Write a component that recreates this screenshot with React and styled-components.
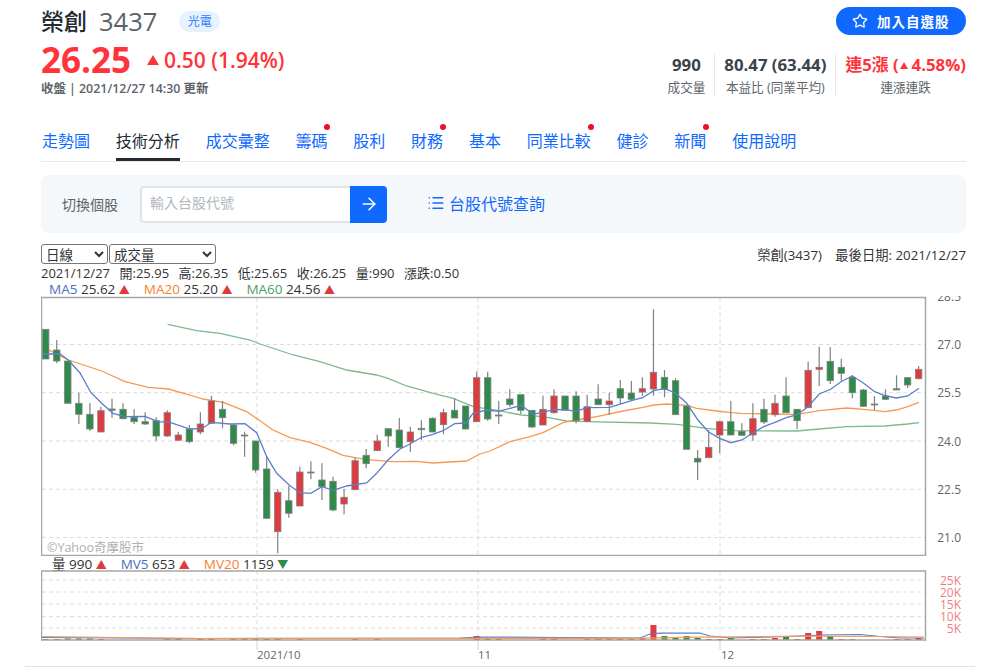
import styled, { createGlobalStyle } from 'styled-components';
import { Star, ArrowRight, List } from 'lucide-react';

const GlobalStyle = createGlobalStyle`
  html, body {
    margin: 0;
    padding: 0;
    background: #fff;
  }
  body {
    font-family: "Open Sans", "Noto Sans CJK TC", sans-serif;
    color: #232a31;
  }
`;

const UP = '#ff333a';
const BLUE = '#0f69ff';
const GRAY = '#5b636a';

const Page = styled.div`
  width: 925px;
  height: 667px;
  padding: 0 34px 0 41px;
  overflow: hidden;
  position: relative;
`;

const Head = styled.header`
  display: flex;
  justify-content: space-between;
  height: 104px;
`;

const HeadLeft = styled.div`
  display: flex;
  flex-direction: column;
`;

const TitleRow = styled.div`
  display: flex;
  align-items: center;
  height: 30px;
  margin-top: 6px;
`;

const Name = styled.h1`
  margin: 0;
  font-size: 23px;
  font-weight: 500;
  line-height: 30px;
`;

const Code = styled.span`
  margin-left: 12px;
  font-size: 25.5px;
  line-height: 30px;
  color: ${GRAY};
`;

const Tag = styled.span`
  margin-left: 22px;
  width: 41px;
  height: 21px;
  border-radius: 11px;
  background: #e8f2ff;
  color: #2f7fff;
  font-size: 12px;
  line-height: 21px;
  text-align: center;
`;

const PriceRow = styled.div`
  display: flex;
  align-items: center;
  color: ${UP};
  height: 40px;
  margin-top: 4px;
`;

const Price = styled.span`
  font-size: 35px;
  font-weight: 700;
  line-height: 40px;
`;

const UpTriangle = styled.i`
  width: 0;
  height: 0;
  margin: 0 5px 0 16px;
  border-left: 6.5px solid transparent;
  border-right: 6.5px solid transparent;
  border-bottom: 10px solid ${UP};
`;

const Delta = styled.span`
  font-size: 21px;
  font-weight: 600;
`;

const Stamp = styled.div`
  font-size: 12.4px;
  font-weight: 600;
  line-height: 16px;
  color: ${GRAY};
  margin-top: 1px;
`;

const HeadRight = styled.div`
  display: flex;
  flex-direction: column;
  align-items: flex-end;
`;

const FollowButton = styled.button`
  display: flex;
  align-items: center;
  gap: 9px;
  width: 130px;
  height: 28px;
  margin-top: 7px;
  padding: 0 0 0 16px;
  border: 0;
  border-radius: 14px;
  background: ${BLUE};
  color: #fff;
  font-family: inherit;
  font-size: 13.5px;
  font-weight: 600;
  letter-spacing: 1px;
`;

const Stats = styled.ul`
  display: flex;
  margin: 19px 0 0;
  padding: 0;
  list-style: none;
`;

const Stat = styled.li`
  display: flex;
  flex-direction: column;
  align-items: center;
  height: 42px;
  padding: 0 0 0 9px;
  margin-left: 9px;
  border-left: ${(p) => (p.$first ? 'none' : '1px solid #e6e8ea')};
`;

const StatValue = styled.strong`
  font-size: 16.8px;
  line-height: 22px;
  font-weight: 700;
  color: ${(p) => (p.$up ? UP : '#3b424a')};
  white-space: nowrap;
`;

const StatLabel = styled.span`
  font-size: 12.6px;
  line-height: 23px;
  color: ${GRAY};
  white-space: nowrap;
`;

const MiniTriangle = styled.i`
  display: inline-block;
  width: 0;
  height: 0;
  margin: 0 4px 2px 1px;
  border-left: 4.5px solid transparent;
  border-right: 4.5px solid transparent;
  border-bottom: 7px solid ${UP};
`;

const Tabs = styled.nav`
  display: flex;
  gap: 25.8px;
  height: 58px;
  padding-left: 1px;
  border-bottom: 1px solid #e6e8ea;
  box-sizing: border-box;
  margin-bottom: 13px;
`;

const Tab = styled.a`
  position: relative;
  height: 57px;
  box-sizing: border-box;
  padding-top: 26px;
  font-size: 16px;
  line-height: 22px;
  color: ${(p) => (p.$active ? '#232a31' : BLUE)};
  border-bottom: ${(p) => (p.$active ? '3px solid #232a31' : 'none')};
  &::after {
    content: '';
    display: ${(p) => (p.$dot ? 'block' : 'none')};
    position: absolute;
    top: 20px;
    right: -3px;
    width: 6px;
    height: 6px;
    border-radius: 50%;
    background: #eb0f29;
  }
`;

const SearchPanel = styled.section`
  display: flex;
  align-items: center;
  height: 58px;
  padding-left: 21px;
  border-radius: 8px;
  background: #f5f8fa;
`;

const SearchLabel = styled.label`
  width: 78px;
  font-size: 14px;
  color: ${GRAY};
`;

const SearchInput = styled.input`
  width: 210px;
  height: 37px;
  box-sizing: border-box;
  padding: 0 8px 3px;
  border: 2px solid #e0e4e9;
  border-right: 0;
  border-radius: 4px 0 0 4px;
  background: #fff;
  font-family: inherit;
  font-size: 14px;
  &::placeholder {
    color: #b0b9c1;
  }
`;

const SearchButton = styled.button`
  display: flex;
  align-items: center;
  justify-content: center;
  width: 37px;
  height: 37px;
  padding: 0;
  border: 0;
  border-radius: 0 4px 4px 0;
  background: ${BLUE};
  color: #fff;
`;

const LookupLink = styled.a`
  display: flex;
  align-items: center;
  gap: 4px;
  margin-left: 40px;
  padding-bottom: 2px;
  font-size: 16px;
  color: ${BLUE};
`;

const ChartBar = styled.div`
  display: flex;
  justify-content: space-between;
  align-items: center;
  height: 20px;
  margin-top: 11px;
`;

const Selects = styled.div`
  display: flex;
  gap: 1px;
`;

const Select = styled.select`
  width: ${(p) => p.$w}px;
  height: 20px;
  padding: 0;
  font-family: inherit;
  font-size: 13.5px;
  color: #333;
  background: #fff;
  border: 1px solid #767676;
  border-radius: 3px;
`;

const Latest = styled.div`
  font-size: 13.3px;
  color: #333;
`;

const InfoRow = styled.div`
  display: flex;
  gap: 9.5px;
  height: 16px;
  margin-top: 1px;
  font-size: 13px;
  line-height: 16px;
  color: #333;
`;

const LegendRow = styled.div`
  display: flex;
  height: ${(p) => p.$h}px;
  padding-left: ${(p) => p.$pad}px;
  font-size: 13.5px;
  line-height: 17px;
  color: #333;
  white-space: nowrap;
`;

const LegendItem = styled.span`
  margin-right: 14px;
`;

const LegendName = styled.span`
  color: ${(p) => p.$color};
`;

const LegendMark = styled.span`
  color: ${(p) => (p.$down ? '#2e8b4a' : '#e0393e')};
  font-size: 11px;
`;

const ChartSvg = styled.svg`
  display: block;
  width: 925px;
  text {
    font-family: "Open Sans", "Noto Sans CJK TC", sans-serif;
  }
`;

const PageFoot = styled.div`
  position: absolute;
  left: 25px;
  right: 25px;
  top: 666px;
  height: 1px;
  background: #e0e4e9;
`;

const TABS = [
  ['走勢圖'],
  ['技術分析', 'active'],
  ['成交彙整'],
  ['籌碼', 'dot'],
  ['股利'],
  ['財務', 'dot'],
  ['基本'],
  ['同業比較', 'dot'],
  ['健診'],
  ['新聞', 'dot'],
  ['使用說明'],
];

// [wick top, body top, body bottom, wick bottom, up?]  y in page px
const CANDLES = [
  [329.3, 329.3, 359, 359, 0], [340, 350, 361, 363.3, 0], [361, 361, 403.3, 403.3, 0], [392.7, 403.3, 414.3, 424, 0],
  [403, 414.3, 429, 431, 0], [406.7, 410.7, 432, 432, 1], [398.7, 409, 410.3, 417.7, 0], [403.3, 409.3, 418.7, 419.3, 0],
  [409.3, 417.3, 421.7, 424, 0], [412.3, 421.7, 424, 425, 0], [417.3, 420.7, 436, 440.7, 0], [410.3, 412.7, 436, 436.7, 1],
  [431.7, 435, 440.3, 440.3, 1], [425, 429, 441.7, 443.3, 0], [412.3, 424, 432, 434.3, 1], [395.7, 401, 423.3, 424, 1],
  [401, 409.3, 417.7, 428.3, 0], [424, 425, 443.3, 445.3, 0], [431.7, 435, 436, 456.7, 0], [441, 441, 470, 472.7, 0],
  [457, 469, 518.3, 518.3, 0], [489.3, 492.3, 531.7, 553.3, 1], [486, 500.7, 513.3, 517.7, 0], [466.7, 472, 506, 506, 1],
  [461.3, 472, 473, 479.3, 0], [463.3, 480, 486.7, 500, 0], [476.7, 481.3, 510, 511.3, 0], [489, 497.3, 504, 514.3, 1],
  [457.7, 460.7, 489.7, 490, 1], [449, 455.3, 463.7, 468.3, 0], [434.7, 441, 450.7, 451, 1], [428, 428.7, 436, 446.7, 0],
  [418, 430, 447.7, 447.7, 0], [426.7, 432, 441.7, 452, 1], [420.3, 428.3, 429.7, 440, 0], [417.3, 418.3, 432, 432.3, 0],
  [408.7, 412.7, 424.7, 434.3, 1], [398.3, 410.3, 418, 418, 0], [406, 406, 429, 429.3, 0], [371.7, 377.7, 421.7, 422, 1],
  [371.7, 377.7, 419, 420.7, 0], [401, 415, 416, 424, 0], [389.3, 399, 404.7, 406.7, 0], [394.7, 394.7, 410.3, 414, 0],
  [410.3, 410.3, 427, 428, 0], [395.7, 409.3, 425, 425, 1], [389.3, 396, 412.7, 413.7, 1], [396, 396, 410.3, 410.3, 0],
  [391.3, 396, 420.7, 423.3, 0], [394.7, 406.7, 421.3, 421.3, 1], [384.3, 399, 404.7, 404.7, 0], [392.7, 401, 404.7, 415, 1],
  [380, 388.7, 398, 404, 0], [381, 393, 399.3, 401.3, 0], [377.3, 388.7, 392, 395.7, 1], [309.3, 372.3, 389, 395.7, 1],
  [370, 377.3, 389.3, 397.3, 0], [378.3, 380.7, 414.7, 414.7, 0], [406, 406, 449.3, 449.3, 0], [450, 458.3, 462, 480, 0],
  [430, 447.3, 457.7, 457.7, 1], [420.7, 421.7, 435, 453.3, 1], [401, 421.7, 435, 435, 0], [423.3, 431.3, 435.3, 435.3, 0],
  [403.3, 418.7, 435, 440.7, 1], [398.7, 409.3, 422, 424, 0], [394.7, 403.3, 414.7, 416.7, 1], [377.3, 396, 412.7, 412.7, 0],
  [409.3, 409.3, 420.7, 429.3, 0], [361.7, 370.3, 407.7, 407.7, 1], [346.7, 367.3, 369.3, 386, 1], [347.3, 361.3, 380.7, 384, 0],
  [358.7, 367.3, 373.3, 380.7, 0], [375, 377.3, 392.7, 398.3, 0], [389, 390, 406.3, 406.7, 0], [396, 404, 405, 410, 0],
  [389.3, 396, 399.3, 400, 0], [375.3, 388.7, 390, 390, 0], [377.3, 377.7, 385, 388, 0], [366, 369.3, 378.7, 379.3, 1],
];

const candleX = (i) => 45.7 + i * 11.05;

const MA5 = '42,354 60,354 68.3,360 80,373 91,392.7 101.7,403.3 113,413.3 125,416.7 145,416.3 158,421.7 170,422.3 190,429 201.7,428.7 211.7,422.3 230,424 245,423.7 256.7,432.7 266.7,456.7 276.7,473.3 290,485.7 300,492.7 310.7,493.3 322,486.7 333.3,490.3 346.7,486 366.7,483 376.7,473.3 388,460 400,449 410,444 421.7,437.3 433,434.3 443,430.7 454.7,423.7 466,423 473,413.3 486.7,410 498.7,411.3 510,408.3 521.3,405.3 533,414.3 542.7,412.3 554,409.3 565.3,409.7 576,411.3 587,407.7 609.7,407.3 631.3,400.7 642.7,397.7 653.7,390.7 664,388.7 675.3,392.7 686.7,403.3 698,420 708.3,431.7 719.7,438.3 731,442.7 742,440 752.3,433.3 763.7,426.7 775,422.3 786.3,417.7 796.7,415 808,406.7 819.3,394 830.7,389.3 841,381.7 852.3,376 863.7,383.3 874.7,391.7 885,395.7 896.3,398 907.7,396 919,388.3';
const MA20 = '42,346.7 68.3,360 101.7,371 125,381.7 148.3,387.3 168.3,389 190,395 203,399 223.3,402.3 246.7,411.7 260,420.7 273,430 290,437.7 310,442.3 326.7,448.3 343,455.3 366.7,459.7 393,461.7 416.7,461.3 433,463 466.7,461 480,454 490,451 510,441.7 530,436.7 543,432.7 563,422.7 576,420 596.7,416.7 623,411 643,407.3 653.7,405 666.7,404 686.7,405.3 696.7,408.3 716.7,411 731,412.7 742,413.3 775,414 796.7,414.3 808,412.7 819.3,410.7 846.7,408 863.7,409.3 885,411.7 896.3,410 907.7,406.7 919,402.3';
const MA60 = '167.7,324.3 196.7,330.7 220,333.3 250,340 260,344 293.3,355 320,361.7 346.7,370 376.7,375 388,378.3 406.7,386 433.3,393.3 453.3,398.3 473.3,406.7 498.7,410.7 521.3,415 543,416.7 566.7,421 586.7,421.7 650,423 676.7,424.3 706.7,428.3 731,430.7 796.7,431 819.3,429 846.7,426.7 885,426 907.7,424 919,422.7';

const PRICE_GRID = [344.5, 392.7, 441, 489.2, 537.5];
const PRICE_TICKS = [['28.5', 296.3], ['27.0', 344.5], ['25.5', 392.7], ['24.0', 441], ['22.5', 489.2], ['21.0', 537.5]];
const VOL_GRID = [580, 592, 604, 616.7, 628];
const VOL_TICKS = ['25K', '20K', '15K', '10K', '5K'];
const V_GRID = [257, 478, 720];

// [candle index, bar height, up?]
const VOLUMES = [
  [0, 1, 0], [1, 1, 0], [2, 1.5, 0], [3, 1.5, 0], [4, 1.5, 0], [5, 1, 1], [11, 1, 1], [12, 1, 0], [14, 1.5, 1], [15, 1.5, 1],
  [17, 1, 0], [18, 1.5, 1], [19, 1, 0], [20, 1.5, 0], [21, 2, 1], [23, 1, 1], [28, 1, 1], [30, 1, 1], [39, 4, 1], [40, 2, 0],
  [41, 1, 1], [45, 1, 1], [46, 1, 1], [49, 1, 1], [50, 1, 1], [51, 1, 1], [52, 1, 1], [53, 1, 0], [54, 2, 1], [55, 15, 1],
  [56, 4, 0], [57, 3, 0], [58, 4, 0], [59, 2, 0], [60, 1, 1], [61, 1, 1], [62, 2, 0], [64, 1, 1], [65, 1, 0], [66, 2, 1],
  [67, 3, 0], [68, 1, 0], [69, 7, 1], [70, 9, 1], [71, 4, 0], [72, 1, 1], [73, 1, 0], [77, 1, 1], [78, 1, 1], [79, 2, 1],
];
const MV5 = '42,637.5 200,638.5 460,638 480,637 560,637.5 640,638 650,634 660,633.2 700,633 710,636 730,638 790,636.5 820,635 860,634.5 880,636.5 900,638 924,638';
const MV20 = '42,636.5 120,637.5 200,638.5 630,638.4 700,637.2 800,636.2 880,636.5 924,637';

function PriceChart() {
  return (
    <ChartSvg height="263" viewBox="41 293 925 263">
      <clipPath id="axisClip">
        <rect x="926" y="296" width="40" height="260" />
      </clipPath>
      {PRICE_GRID.map((y) => (
        <line key={y} x1="42" x2="925" y1={y} y2={y} stroke="#dcdcdc" strokeDasharray="4 3" />
      ))}
      {V_GRID.map((x) => (
        <line key={x} x1={x} x2={x} y1="298" y2="555" stroke="#dcdcdc" strokeDasharray="4 3" />
      ))}
      <polyline points={MA60} fill="none" stroke="#7cba8e" strokeWidth="1.3" />
      <polyline points={MA20} fill="none" stroke="#f9984f" strokeWidth="1.3" />
      {CANDLES.map(([wt, bt, bb, wb, up], i) => {
        const x = candleX(i);
        return (
          <g key={i}>
            <line x1={x} x2={x} y1={wt} y2={wb} stroke="#808080" strokeWidth="1.2" />
            <rect
              x={x - 3.2}
              y={bt}
              width="6.4"
              height={Math.max(bb - bt, 0.6)}
              fill={up ? '#e0393e' : '#2e8b4a'}
              stroke="#808080"
              strokeWidth="0.8"
            />
          </g>
        );
      })}
      <polyline points={MA5} fill="none" stroke="#5b7fc9" strokeWidth="1.3" />
      <rect x="41.5" y="297.5" width="884" height="258" fill="none" stroke="#a6a6a6" strokeWidth="1.5" />
      <text x="47" y="552" fontSize="12.5" fill="#b0b0b0">©Yahoo奇摩股市</text>
      <g clipPath="url(#axisClip)">
        {PRICE_TICKS.map(([label, y]) => (
          <text key={label} x="961" y={y + 4.5} textAnchor="end" fontSize="12" fill="#666">{label}</text>
        ))}
      </g>
    </ChartSvg>
  );
}

function VolumeChart() {
  return (
    <ChartSvg height="92" viewBox="41 570 925 92">
      {VOL_GRID.map((y) => (
        <line key={y} x1="42" x2="925" y1={y} y2={y} stroke="#dcdcdc" strokeDasharray="4 3" />
      ))}
      {V_GRID.map((x) => (
        <g key={x}>
          <line x1={x} x2={x} y1="571" y2="640" stroke="#dcdcdc" strokeDasharray="4 3" />
          <line x1={x} x2={x} y1="640" y2="650" stroke="#c5d6e8" />
        </g>
      ))}
      {VOLUMES.map(([i, h, up]) => (
        <rect
          key={i}
          x={candleX(i) - 3}
          y={640 - h}
          width="6"
          height={h}
          fill={up ? '#e0393e' : '#2e8b4a'}
        />
      ))}
      <polyline points={MV5} fill="none" stroke="#5b7fc9" strokeWidth="1.2" />
      <polyline points={MV20} fill="none" stroke="#f9984f" strokeWidth="1.2" />
      <rect x="41.5" y="571" width="884" height="69" fill="none" stroke="#a6a6a6" strokeWidth="1.5" />
      {VOL_TICKS.map((label, i) => (
        <text key={label} x="961" y={VOL_GRID[i] + 4.5} textAnchor="end" fontSize="12" fill="#ee7d84">{label}</text>
      ))}
      <text x="257" y="659" fontSize="11.5" fill="#666">2021/10</text>
      <text x="478" y="659" fontSize="11.5" fill="#666">11</text>
      <text x="721" y="659" fontSize="11.5" fill="#666">12</text>
    </ChartSvg>
  );
}

export default function App() {
  return (
    <Page>
      <GlobalStyle />
      <Head>
        <HeadLeft>
          <TitleRow>
            <Name>榮創</Name>
            <Code>3437</Code>
            <Tag>光電</Tag>
          </TitleRow>
          <PriceRow>
            <Price>26.25</Price>
            <UpTriangle />
            <Delta>0.50 (1.94%)</Delta>
          </PriceRow>
          <Stamp>收盤 | 2021/12/27 14:30 更新</Stamp>
        </HeadLeft>
        <HeadRight>
          <FollowButton>
            <Star size={16} strokeWidth={2} />
            加入自選股
          </FollowButton>
          <Stats>
            <Stat $first>
              <StatValue>990</StatValue>
              <StatLabel>成交量</StatLabel>
            </Stat>
            <Stat>
              <StatValue>80.47 (63.44)</StatValue>
              <StatLabel>本益比 (同業平均)</StatLabel>
            </Stat>
            <Stat>
              <StatValue $up>
                連5漲 (<MiniTriangle />4.58%)
              </StatValue>
              <StatLabel>連漲連跌</StatLabel>
            </Stat>
          </Stats>
        </HeadRight>
      </Head>

      <Tabs>
        {TABS.map(([label, kind]) => (
          <Tab key={label} $active={kind === 'active'} $dot={kind === 'dot'}>
            {label}
          </Tab>
        ))}
      </Tabs>

      <SearchPanel>
        <SearchLabel>切換個股</SearchLabel>
        <SearchInput placeholder="輸入台股代號" />
        <SearchButton>
          <ArrowRight size={20} strokeWidth={1.8} />
        </SearchButton>
        <LookupLink>
          <List size={18} strokeWidth={2} />
          台股代號查詢
        </LookupLink>
      </SearchPanel>

      <ChartBar>
        <Selects>
          <Select $w={67}>
            <option>日線</option>
          </Select>
          <Select $w={107}>
            <option>成交量</option>
          </Select>
        </Selects>
        <Latest>榮創(3437)　最後日期: 2021/12/27</Latest>
      </ChartBar>

      <InfoRow>
        <span>2021/12/27</span>
        <span>開:25.95</span>
        <span>高:26.35</span>
        <span>低:25.65</span>
        <span>收:26.25</span>
        <span>量:990</span>
        <span>漲跌:0.50</span>
      </InfoRow>
      <LegendRow $h={12} $pad={8}>
        <LegendItem><LegendName $color="#4a6fc0">MA5</LegendName> 25.62 <LegendMark>▲</LegendMark></LegendItem>
        <LegendItem><LegendName $color="#f6812e">MA20</LegendName> 25.20 <LegendMark>▲</LegendMark></LegendItem>
        <LegendItem><LegendName $color="#4a9e62">MA60</LegendName> 24.56 <LegendMark>▲</LegendMark></LegendItem>
      </LegendRow>

      <PriceChart />

      <LegendRow $h={14} $pad={11}>
        <LegendItem>量 990 <LegendMark>▲</LegendMark></LegendItem>
        <LegendItem><LegendName $color="#4a6fc0">MV5</LegendName> 653 <LegendMark>▲</LegendMark></LegendItem>
        <LegendItem><LegendName $color="#f6812e">MV20</LegendName> 1159 <LegendMark $down>▼</LegendMark></LegendItem>
      </LegendRow>

      <VolumeChart />
      <PageFoot />
    </Page>
  );
}
